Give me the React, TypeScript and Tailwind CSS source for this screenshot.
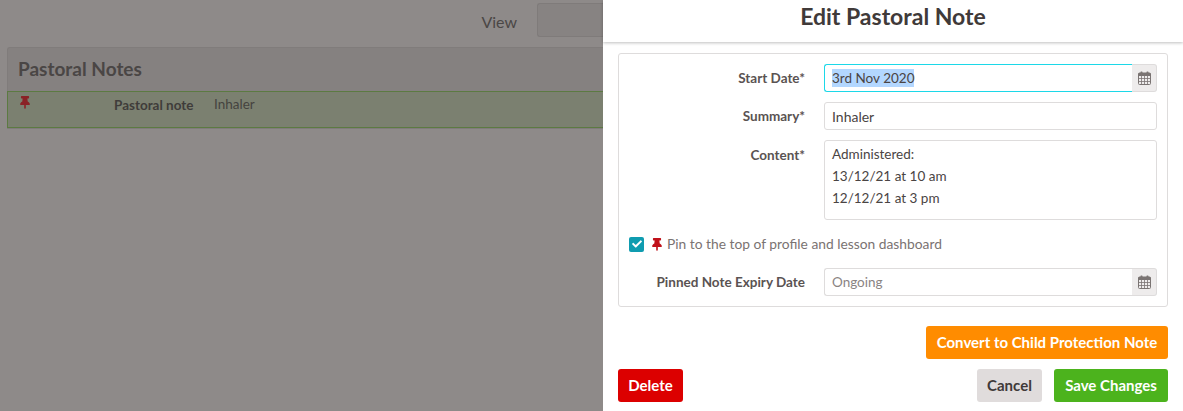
import React from 'react';
import { FaThumbtack, FaCheck } from 'react-icons/fa';

// fa-calendar with open cells, the package version is too heavy at this size
function CalendarIcon() {
  return (
    <svg viewBox="0 0 13 14" className="w-[13px] h-[14px]" fill="none">
      <rect x="0.5" y="2" width="12" height="11.5" rx="1" stroke="currentColor" />
      <rect x="0.5" y="2" width="12" height="3" fill="currentColor" />
      <rect x="2.5" y="0.5" width="2" height="3" rx="0.6" fill="currentColor" />
      <rect x="8.5" y="0.5" width="2" height="3" rx="0.6" fill="currentColor" />
      <path d="M3.5 5v8M6.5 5v8M9.5 5v8M1 7.5h11M1 10.5h11" stroke="currentColor" strokeWidth="0.8" />
    </svg>
  );
}

function CalendarAddon() {
  return (
    <div className="w-[25px] shrink-0 flex items-center justify-center bg-[#eeecec] border border-l-0 border-[#dedcdc] rounded-r-[3px] text-[#7a7473]">
      <CalendarIcon />
    </div>
  );
}

function Label({ children }: { children: React.ReactNode }) {
  return <div className="w-[186px] shrink-0 text-right font-bold text-[13.5px] text-[#5a5352]">{children}</div>;
}

export default function App() {
  return (
    <div className="w-[1183px] h-[411px] flex overflow-hidden text-[14px] font-['Lato','Noto_Sans',sans-serif] text-[#4a4443]">
      {/* Dimmed page behind the panel */}
      <div className="w-[603px] shrink-0 bg-[#8e8a89] flex flex-col">
        <div className="h-[47px] pt-[3px] flex justify-end items-start">
          <span className="mt-[7px] mr-[20px] text-[16px] text-[#4b4746]">View</span>
          <div className="w-[66px] h-[34px] bg-[#878382] border border-r-0 border-[#7f7b7a] rounded-l-[3px]" />
        </div>
        <div className="ml-[7px] border border-r-0 border-[#807c7b] rounded-tl-[3px] bg-[#858180]">
          <div className="h-[43px] pl-[10px] flex items-center text-[19px] font-bold text-[#4a4645]">Pastoral Notes</div>
          <div className="h-[37px] -ml-px bg-[#7b8070] border border-r-0 border-[#5c7a42] flex items-start pt-[2px] text-[13.5px]">
            <FaThumbtack className="ml-[12px] mt-[2px] w-[10px] h-[13px] text-[#8a2226]" />
            <span className="ml-[84px] mt-[1px] w-[100px] font-bold text-[#3f3c3a]">Pastoral note</span>
            <span className="text-[#45433f]">Inhaler</span>
          </div>
        </div>
      </div>

      {/* Edit panel */}
      <div className="w-[580px] shrink-0 bg-white flex flex-col">
        <div className="h-[42px] pb-[9px] flex items-center justify-center shadow-[0_1px_3px_rgba(0,0,0,0.25)] text-[23px] font-bold text-[#403a39]">
          Edit Pastoral Note
        </div>

        <div className="mt-[11px] mx-[15px] h-[254px] border border-[#dedcdc] rounded-[3px] pt-[10px] flex flex-col">
          <div className="flex items-center h-[28px]">
            <Label>Start Date*</Label>
            <div className="ml-[19px] w-[333px] h-[28px] flex">
              <div className="flex-1 border border-r-0 border-[#1cd8e8] rounded-l-[3px] pl-[7px] flex items-center">
                <span className="bg-[#b3d7ff] leading-[18px] text-[13.5px] text-[#4a4443]">3rd Nov 2020</span>
              </div>
              <CalendarAddon />
            </div>
          </div>

          <div className="mt-[10px] flex items-center h-[28px]">
            <Label>Summary*</Label>
            <input
              readOnly
              value="Inhaler"
              className="ml-[19px] w-[333px] h-[28px] border border-[#dedcdc] rounded-[3px] px-[7px] outline-none"
            />
          </div>

          <div className="mt-[10px] flex items-start h-[80px]">
            <div className="pt-[5px]">
              <Label>Content*</Label>
            </div>
            <textarea
              readOnly
              value={'Administered:\n13/12/21 at 10 am\n12/12/21 at 3 pm'}
              className="ml-[19px] w-[333px] h-[80px] border border-[#dedcdc] rounded-[3px] px-[7px] py-[2px] leading-[22px] text-[13.5px] resize-none outline-none"
            />
          </div>

          <div className="mt-[16px] h-[16px] pl-[10px] flex items-center">
            <div className="w-[15px] h-[15px] rounded-[2px] bg-[#0f9cb0] flex items-center justify-center text-white">
              <FaCheck className="w-[10px] h-[10px]" />
            </div>
            <FaThumbtack className="ml-[8px] w-[10px] h-[13px] text-[#c0111a]" />
            <span className="ml-[5px] text-[13.8px] text-[#7a7372]">Pin to the top of profile and lesson dashboard</span>
          </div>

          <div className="mt-[16px] flex items-center h-[28px]">
            <Label>Pinned Note Expiry Date</Label>
            <div className="ml-[19px] w-[333px] h-[28px] flex">
              <input
                readOnly
                placeholder="Ongoing"
                className="flex-1 min-w-0 border border-r-0 border-[#dedcdc] rounded-l-[3px] px-[7px] text-[13.5px] outline-none placeholder:text-[#8a8483]"
              />
              <CalendarAddon />
            </div>
          </div>
        </div>

        <div className="mt-[19px] mx-[15px] flex justify-end">
          <button className="w-[242px] h-[33px] rounded-[3px] bg-[#ff8c00] text-white font-bold text-[15px]">
            Convert to Child Protection Note
          </button>
        </div>
        <div className="mt-[10px] mx-[15px] flex items-center">
          <button className="w-[65px] h-[33px] rounded-[3px] bg-[#dc0000] text-white font-bold text-[15px]">Delete</button>
          <button className="ml-auto w-[65px] h-[33px] rounded-[3px] bg-[#e0dcdc] text-[#403a39] font-bold text-[15px]">Cancel</button>
          <button className="ml-[12px] w-[114px] h-[33px] rounded-[3px] bg-[#4cb31d] text-white font-bold text-[15px]">Save Changes</button>
        </div>
      </div>
    </div>
  );
}
